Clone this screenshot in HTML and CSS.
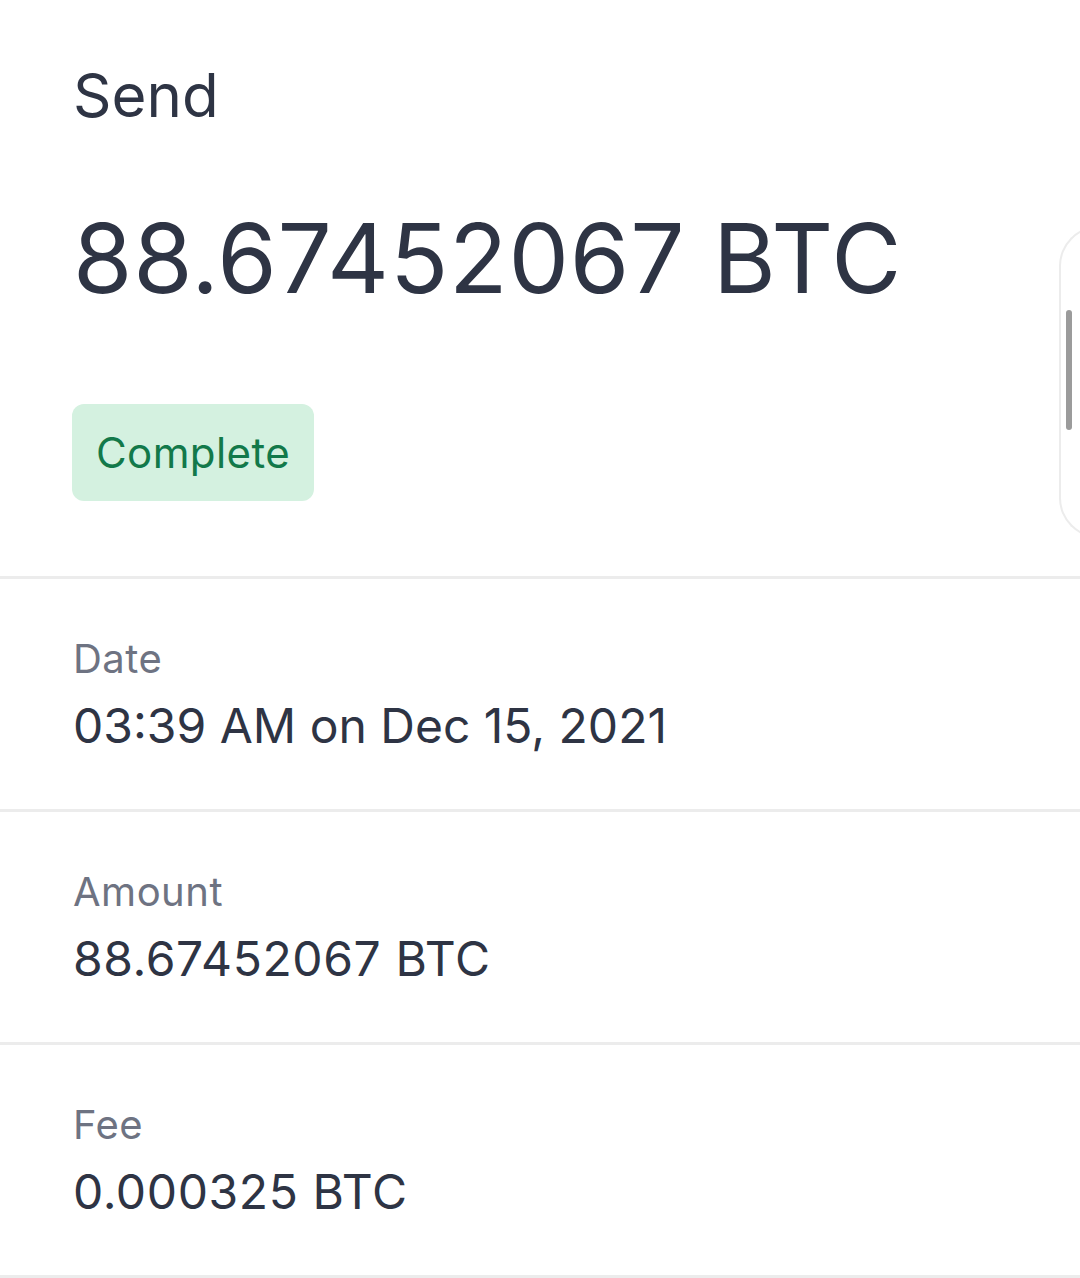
FILE: index.html
```html
<!DOCTYPE html>
<html>
<head>
<meta charset="utf-8">
<title>Send</title>
<link rel="stylesheet" href="styles.css">
</head>
<body>
<div class="sheet">
	<div class="head">
		<h1 class="title">Send</h1>
		<div class="total">88.67452067 BTC</div>
		<span class="status">Complete</span>
	</div>
	<ul class="info">
		<li>
			<div class="label">Date</div>
			<div class="value">03:39 AM on Dec 15, 2021</div>
		</li>
		<li>
			<div class="label">Amount</div>
			<div class="value num">88.67452067 BTC</div>
		</li>
		<li>
			<div class="label">Fee</div>
			<div class="value num">0.000325 BTC</div>
		</li>
	</ul>
	<div class="scroller"><span class="thumb"></span></div>
</div>
</body>
</html>
```

FILE: styles.css
```css
*{margin:0; padding:0; list-style:none; box-sizing:border-box;}
html,body{background:#fff;}
body{font-family:Inter, "Noto Sans", sans-serif; color:#2e3444; overflow:hidden;}
.sheet{position:relative; width:1080px; height:1278px;}
.head{padding:59px 0 75px 73px; display:flex; flex-direction:column; align-items:flex-start;}
.title{font-size:60px; font-weight:400; line-height:72px;}
.total{font-size:96px; line-height:115px; margin-top:70px; letter-spacing:0.8px;}
.status{margin-top:88px; height:97px; padding:0 24px; display:flex; align-items:center; background:#d4f1e0; color:#12794a; font-size:42px; letter-spacing:0.4px; border-radius:12px; margin-left:-1px;}
.info li{border-top:3px solid #ececec; padding:56px 0 54px 73px;}
.info li:last-child{border-bottom:3px solid #ececec;}
.label{font-size:40px; line-height:48px; color:#6e7382; letter-spacing:0.5px;}
.value{font-size:48px; line-height:58px; margin-top:14px;}
.value.num{letter-spacing:0.6px;}
.scroller{position:absolute; left:1059px; top:226px; width:60px; height:312px; border:2px solid #ececec; border-right:none; border-radius:40px 0 0 40px;}
.thumb{position:absolute; left:5px; top:82px; width:6px; height:120px; background:#9b9b9b; border-radius:3px;}
```
